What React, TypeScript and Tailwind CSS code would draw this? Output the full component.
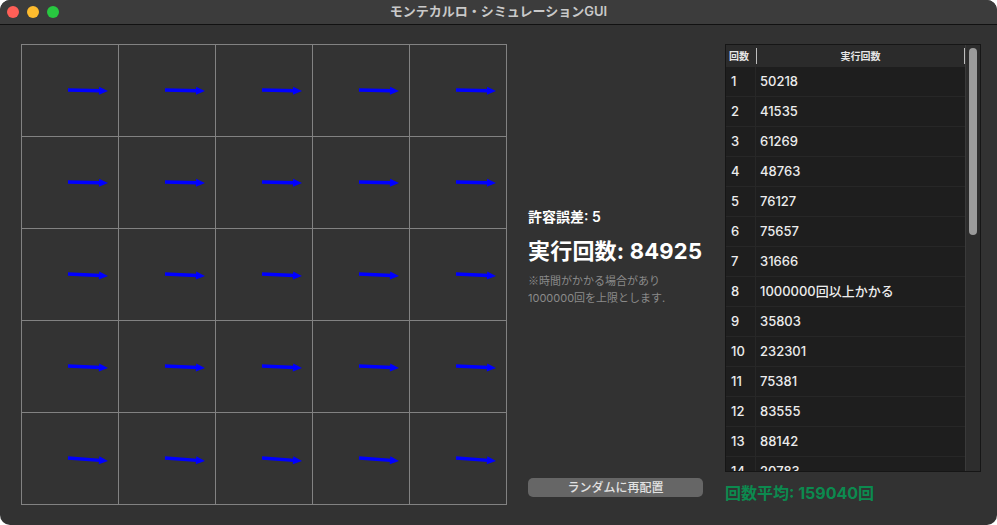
import React from "react";

const rows: [number, string][] = [
  [1, "50218"],
  [2, "41535"],
  [3, "61269"],
  [4, "48763"],
  [5, "76127"],
  [6, "75657"],
  [7, "31666"],
  [8, "1000000回以上かかる"],
  [9, "35803"],
  [10, "232301"],
  [11, "75381"],
  [12, "83555"],
  [13, "88142"],
  [14, "20783"],
];

// tilt (px) of each row's arrows
const tilts = [1, 1, 2, 2, 3];

const font = { fontFamily: 'Inter, "Noto Sans CJK JP", sans-serif' };

function Arrow({ dy }: { dy: number }) {
  const x1 = 46;
  const y1 = 45;
  const x2 = 86;
  const y2 = 45 + dy;
  const ang = Math.atan2(y2 - y1, x2 - x1);
  const hx = x2 - 9 * Math.cos(ang);
  const hy = y2 - 9 * Math.sin(ang);
  const px = -Math.sin(ang) * 4;
  const py = Math.cos(ang) * 4;
  return (
    <svg width="96" height="91" className="absolute left-0 top-0">
      <line x1={x1} y1={y1} x2={hx + 1} y2={hy} stroke="#0000ff" strokeWidth="3.4" />
      <polygon
        points={`${x2},${y2} ${hx + px},${hy + py} ${hx - px},${hy - py}`}
        fill="#0000ff"
      />
    </svg>
  );
}

function Board() {
  return (
    <div className="self-start grid grid-cols-5 border-l border-t border-[#828282] w-[486px]">
      {tilts.map((t, r) =>
        [0, 1, 2, 3, 4].map((c) => (
          <div
            key={`${r}-${c}`}
            className="relative h-[92px] border-r border-b border-[#828282] bg-[#333333]"
          >
            <Arrow dy={t} />
          </div>
        ))
      )}
    </div>
  );
}

function Table() {
  return (
    <div className="flex h-[428px] w-[256px] border border-[#161616] bg-[#1e1e1e] overflow-hidden">
      <div className="flex-1 flex flex-col overflow-hidden">
        {/* HEADER */}
        <div className="flex h-[22px] shrink-0 bg-[#2b2b2b] items-center text-[10px] font-semibold text-[#e6e6e6]">
          <div className="w-[30px] pl-[3px] flex items-center h-full">回数</div>
          <div className="w-px h-[16px] bg-[#bdbdbd]" />
          <div className="flex-1 text-center">実行回数</div>
          <div className="w-px h-[16px] bg-[#bdbdbd]" />
        </div>
        {/* ROWS */}
        {rows.map(([n, v]) => (
          <div
            key={n}
            className="flex h-[30px] shrink-0 border-b border-[#272727] text-[13px] font-medium text-[#ececec]"
          >
            <div className="w-[30px] pl-[5px] flex items-center border-r border-[#272727]">{n}</div>
            <div className="flex-1 pl-[4px] flex items-center">{v}</div>
          </div>
        ))}
      </div>
      {/* SCROLLBAR */}
      <div className="w-[15px] bg-[#2d2d2d] border-l border-[#3a3a3a] flex justify-center pt-[3px]">
        <div className="w-[8px] h-[187px] rounded-full bg-[#9b9b9b]" />
      </div>
    </div>
  );
}

export default function App() {
  return (
    <div className="w-[997px] h-[525px] flex flex-col bg-[#323232] rounded-[10px] overflow-hidden" style={font}>
      {/* TITLE BAR */}
      <div className="relative h-[25px] shrink-0 bg-[#3c3c3c] border-b border-[#111111] flex items-center justify-center">
        <div className="absolute left-[7px] top-[6px] flex gap-[8px]">
          <div className="w-[12px] h-[12px] rounded-full bg-[#ff5f57]" />
          <div className="w-[12px] h-[12px] rounded-full bg-[#febc2e]" />
          <div className="w-[12px] h-[12px] rounded-full bg-[#28c840]" />
        </div>
        <span className="text-[13px] font-semibold text-[#c9c9c9]">モンテカルロ・シミュレーションGUI</span>
      </div>

      {/* CONTENT */}
      <div className="flex flex-1 pt-[19px] pl-[21px]">
        <Board />

        {/* INFO */}
        <div className="ml-[21px] w-[176px] h-[461px] flex flex-col">
          <div className="pt-[164px] text-white">
            <p className="text-[14px] font-semibold leading-[18px]">許容誤差: 5</p>
            <p className="mt-[11px] whitespace-nowrap text-[22px] font-bold leading-[28px] tracking-[0.2px]">
              実行回数: 84925
            </p>
            <p className="mt-[7px] text-[11px] leading-[17px] text-[#8a8a8a]">
              <span style={{ fontFamily: '"Noto Sans CJK JP", sans-serif' }}>※</span>時間がかかる場合があり
              <br />
              1000000回を上限とします.
            </p>
          </div>
          <div className="flex-1" />
          <button className="mb-[8px] h-[19px] w-[175px] rounded-[5px] bg-[#666666] text-[12px] font-medium text-[#e2e2e2] leading-[19px]">
            ランダムに再配置
          </button>
        </div>

        {/* TABLE */}
        <div className="ml-[21px] flex flex-col">
          <Table />
          <p className="mt-[11px] text-[16px] font-bold leading-[20px] text-[#0c8a4f]">回数平均: 159040回</p>
        </div>
      </div>
    </div>
  );
}
